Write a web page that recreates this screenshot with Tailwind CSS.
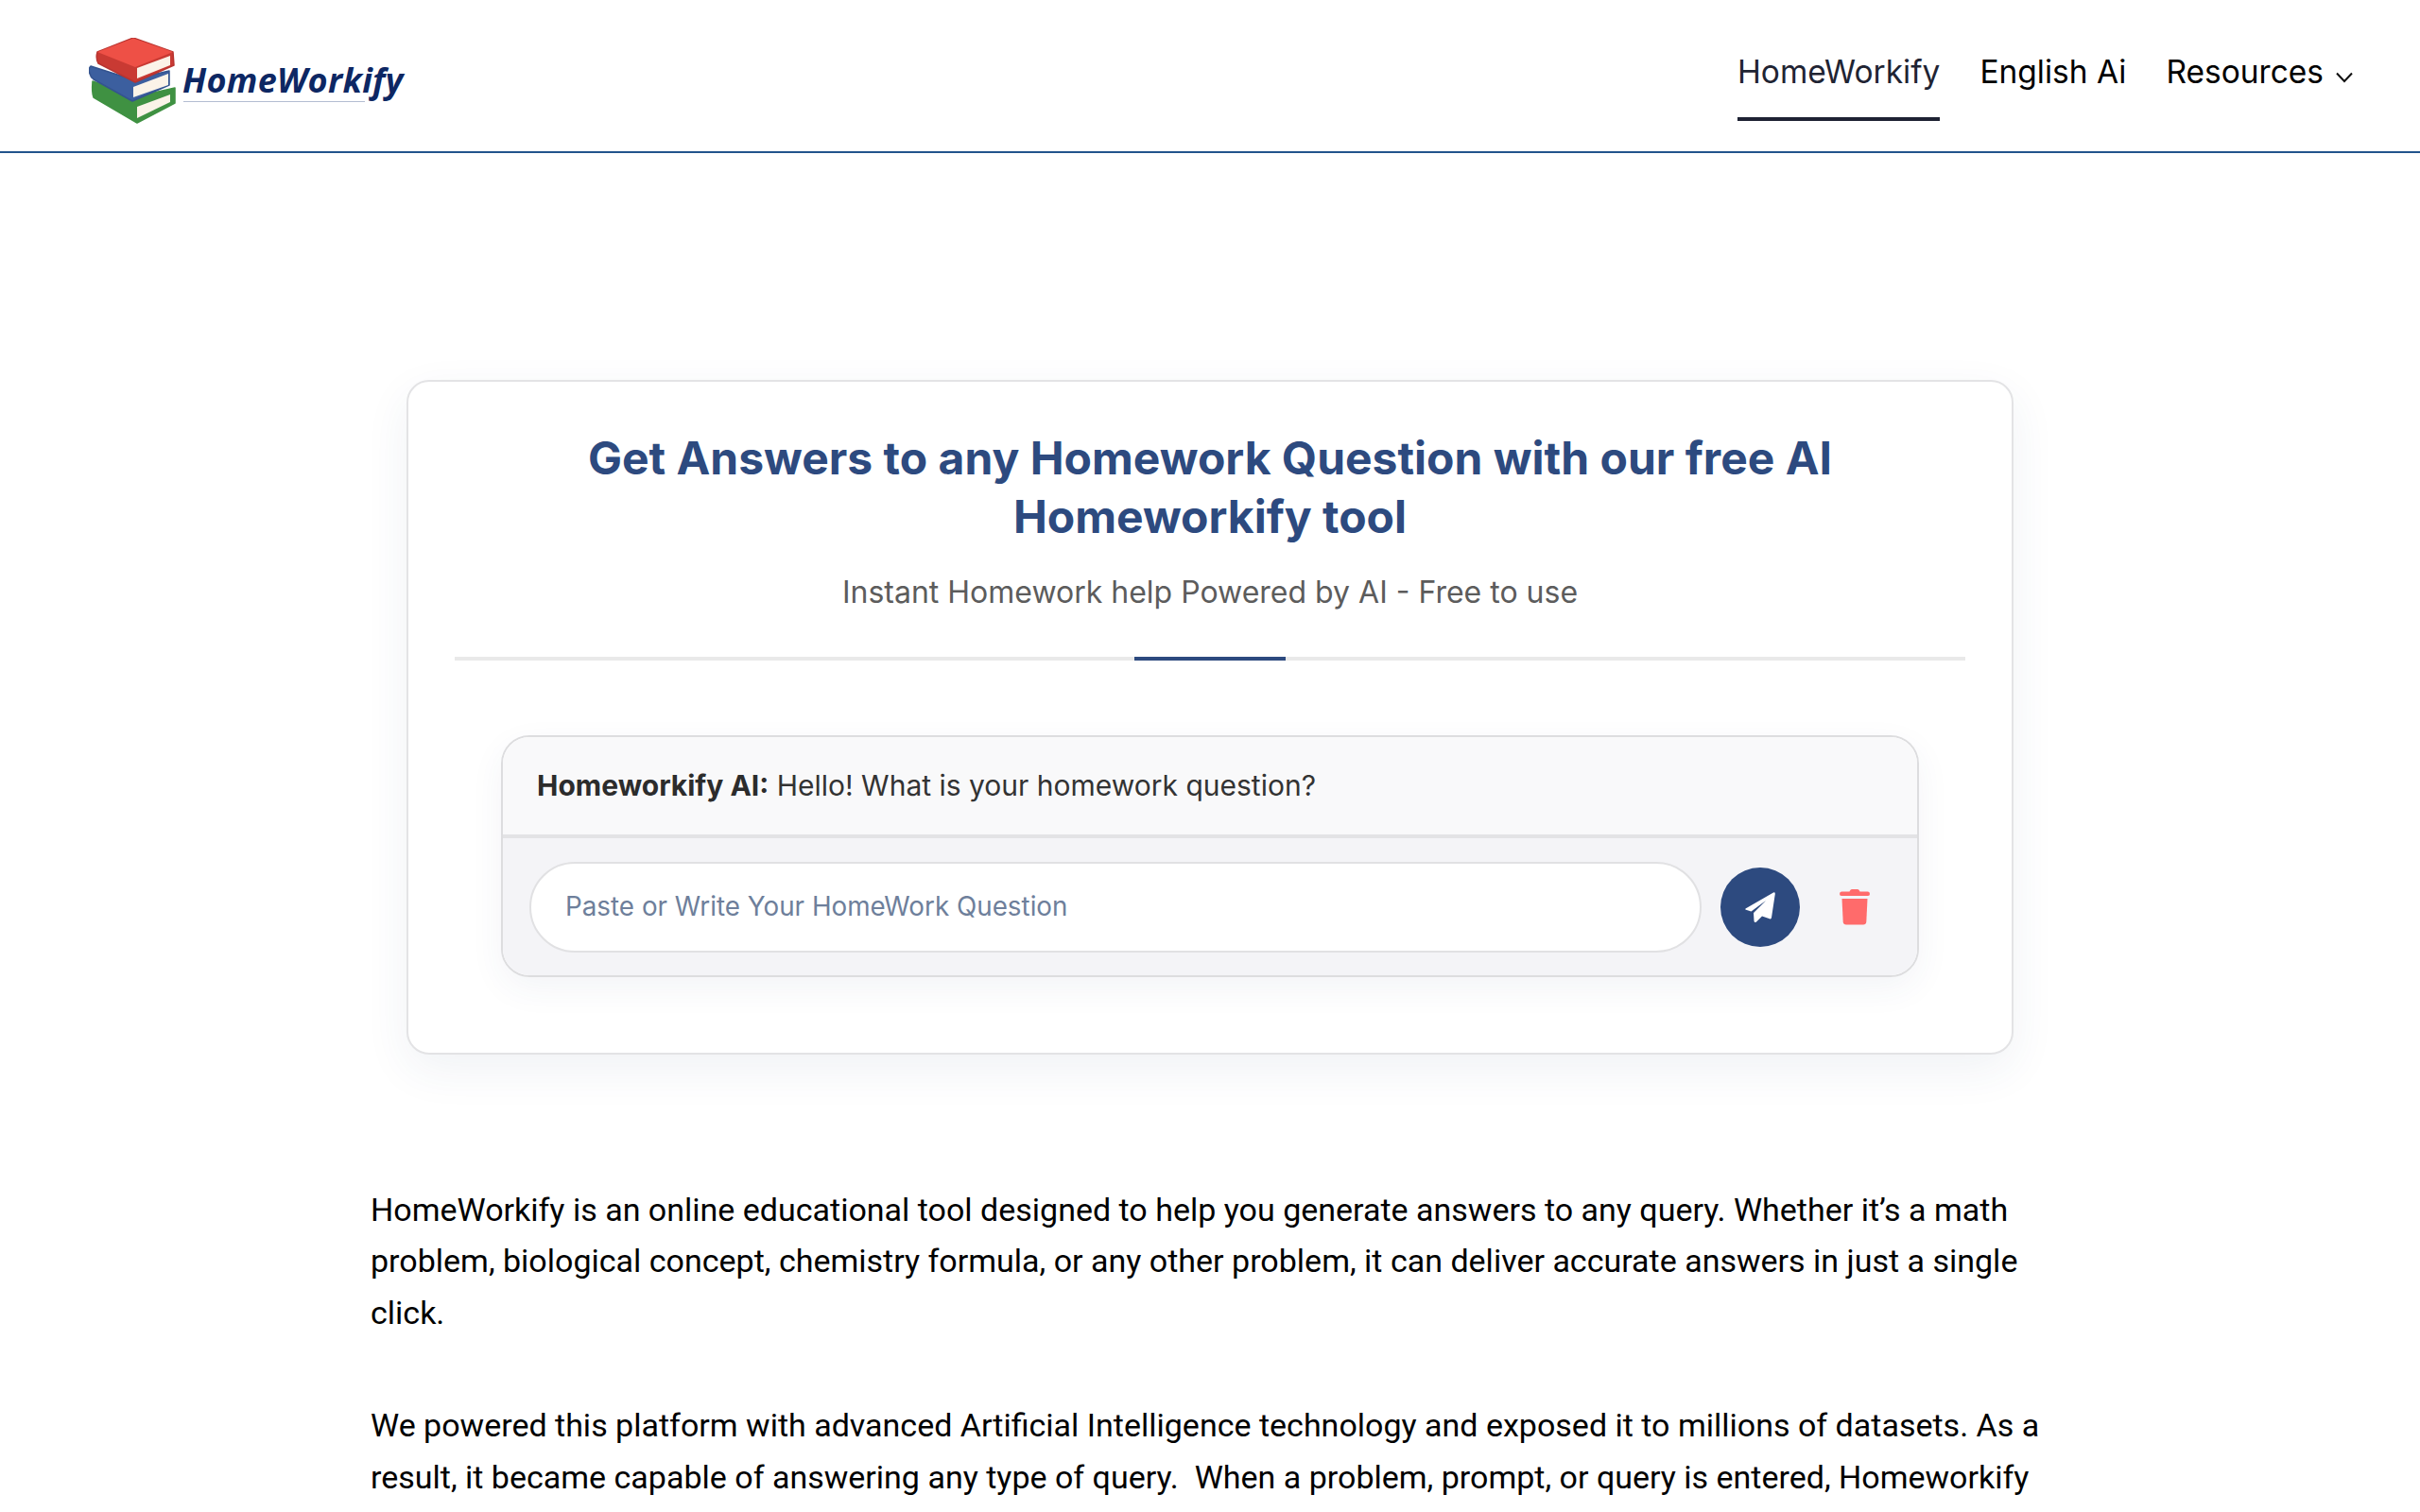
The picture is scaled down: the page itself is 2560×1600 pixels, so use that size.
<!DOCTYPE html>
<html lang="en">
<head>
<meta charset="utf-8">
<title>HomeWorkify</title>
<script src="https://cdn.jsdelivr.net/npm/@tailwindcss/browser@4"></script>
</head>
<body class="h-[1600px] overflow-hidden bg-white font-['Inter',sans-serif] text-black">
<header class="h-[162px] border-b-2 border-[#22558c] flex items-center justify-between pl-[94px] pr-[70px]">
  <a class="flex items-center w-[340px] h-[91px] mt-[11px] relative">
    <svg class="w-[92px] h-[91px] shrink-0" viewBox="0 0 92 91" stroke-linejoin="round">
      <path d="M4 46 Q3 58 5 63 L51 90 L91 69 L91 53 L51 62 Z" fill="#3f9142" stroke="#3f9142" stroke-width="1.500"/>
      <path d="M51 73 L86 60 L86 68 L51 85 Z" fill="#fbf3e8"/>
      <path d="M2 30 Q-1 33 1 38 Q2 42 5 44 L46 67 L85 50 L85 35 L46 44 Z" fill="#3c5f9f" stroke="#34548f" stroke-width="1.500"/>
      <path d="M47 52 L84 38 L84 50 L47 63 Z" fill="#fbf3e8"/>
      <path d="M9 15 L47 0 L89 15 L90 29 L49 47 L10 27 Q7 22 9 15 Z" fill="#c93a33" stroke="#b83430" stroke-width="1.500"/>
      <path d="M9 15 L47 0.500 L89 15 L49 31 Z" fill="#ee5046"/>
      <path d="M51 32 L86 19 L86 29 L51 43 Z" fill="#fbf3e8"/>
    </svg>
    <span class="absolute left-[99px] top-[20px] font-['Open_Sans',sans-serif] font-bold italic text-[36px] leading-[50px] tracking-[0.3px] text-[#0d2763]">HomeWorkify</span>
    <span class="absolute left-[100px] top-[67px] w-[192px] h-[1px] bg-[#b4bdd2]"></span>
  </a>
  <nav class="flex items-start h-[128px] self-start pt-[30px] text-[33.500px] leading-[92px] gap-[42px]">
    <a class="h-[98px] border-b-4 border-[#1e2233] text-[#1f2433]">HomeWorkify</a>
    <a class="h-[98px]">English Ai</a>
    <a class="h-[98px] flex">Resources
      <svg class="w-[20px] h-[14px] ml-[12px] mt-[45px]" viewBox="0 0 20 14" fill="none" stroke="#111" stroke-width="2"><path d="M2 2.500 L10 11 L18 2.500"/></svg>
    </a>
  </nav>
</header>
<main>
  <section class="w-[1700px] h-[714px] mx-auto mt-[240px] border-2 border-[#e3e3e5] rounded-[24px] bg-white shadow-[0_16px_48px_rgba(45,70,120,0.07)] px-[49px] pt-[50px]">
    <h1 class="text-[48px] leading-[62px] font-bold text-center text-[#2d4a7f] px-[100px]">Get Answers to any Homework Question with our free AI Homeworkify tool</h1>
    <p class="mt-[27px] text-[32px] leading-[44px] text-center text-[#5c5c5c]">Instant Homework help Powered by AI - Free to use</p>
    <div class="mt-[46px] h-[4px] bg-[#e9e9e9] flex justify-center">
      <div class="w-[160px] h-full bg-[#2d4a7f]"></div>
    </div>
    <div class="mt-[79px] mx-[49px] h-[256px] border-2 border-[#dddddf] rounded-[30px] overflow-hidden shadow-[0_12px_36px_rgba(45,70,120,0.06)]">
      <div class="h-[107px] bg-[#f9f9fa] border-b-4 border-[#e3e3e5] px-[36px] flex items-center text-[30px] text-[#333]">
        <p><b class="font-bold text-[#2c2c2c]">Homeworkify AI:</b> Hello! What is your homework question?</p>
      </div>
      <div class="h-[145px] bg-[#f4f4f7] flex items-center pl-[28px]">
        <div class="w-[1240px] h-[96px] rounded-full bg-white border-2 border-[#e1e1e3] pl-[36px] flex items-center text-[27.800px] text-[#6e7f9b]">Paste or Write Your HomeWork Question</div>
        <button class="ml-[20px] w-[84px] h-[84px] rounded-full bg-[#2d4a7f] flex items-center justify-center">
          <svg class="w-[34px] h-[34px]" viewBox="0 0 34 34"><path d="M1.500 18.500 L31 1.500 Q33 0.600 32.800 3 L29 28 Q28.700 30 27 29.300 L19 26.500 L13 32.500 Q11 34 10.500 31.500 L10 23 L23 10 L7.500 21.600 L2 19.800 Q0.600 19.200 1.500 18.500 Z" fill="#fff"/></svg>
        </button>
        <button class="ml-[42px] w-[32px] h-[38px]">
          <svg class="w-[32px] h-[38px]" viewBox="0 0 32 38" fill="#ff6b6b"><path d="M11 1.500 Q11.500 0 13 0 H19 Q20.500 0 21 1.500 L21.500 2.500 H30 Q32 2.500 32 5 Q32 7 30 7 H2 Q0 7 0 5 Q0 2.500 2 2.500 H10.500 Z"/><path d="M2.500 10 H29.500 L28.300 34.500 Q28 37.500 25 37.500 H7 Q4 37.500 3.700 34.500 Z"/></svg>
        </button>
      </div>
    </div>
  </section>
  <article class="w-[1776px] mx-auto mt-[137px] font-['Roboto',sans-serif] text-[34px] leading-[54.400px] text-black">
    <p>HomeWorkify is an online educational tool designed to help you generate answers to any query. Whether it’s a math problem, biological concept, chemistry formula, or any other problem, it can deliver accurate answers in just a single click.</p>
    <p class="mt-[65px]">We powered this platform with advanced Artificial Intelligence technology and exposed it to millions of datasets. As a result, it became capable of answering any type of query.&nbsp; When a problem, prompt, or query is entered, Homeworkify</p>
  </article>
</main>
</body>
</html>
